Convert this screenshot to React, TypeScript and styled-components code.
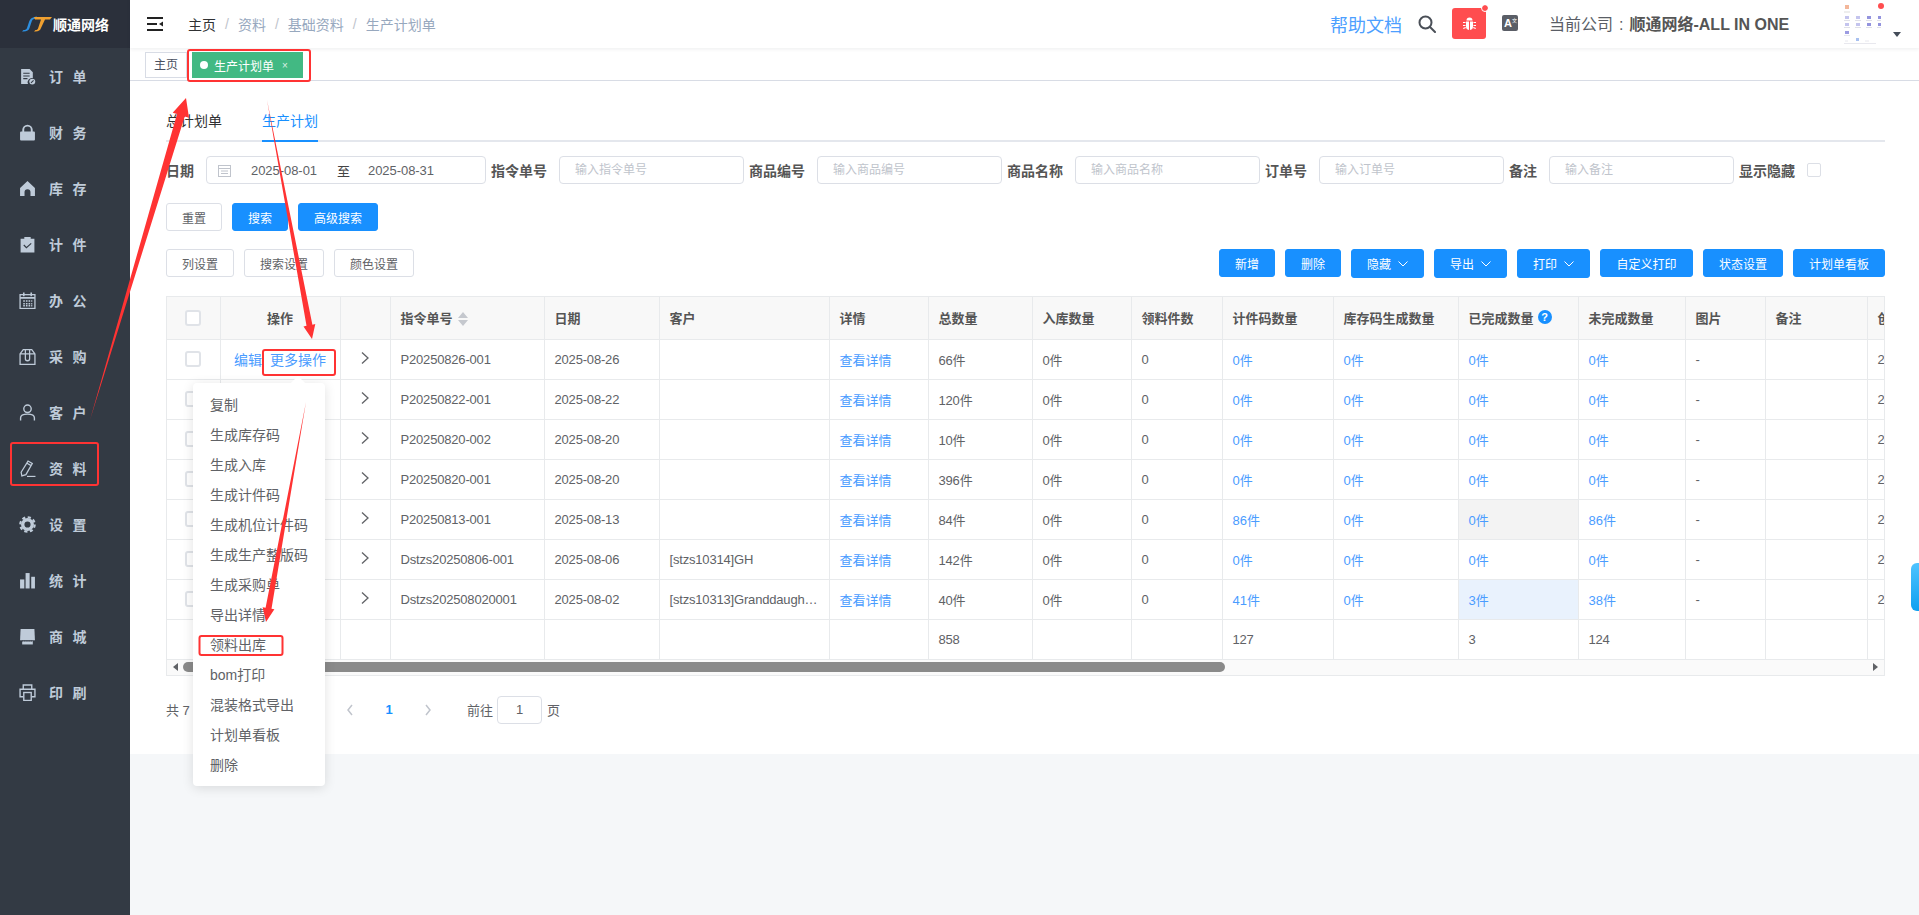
import React from "react";
import styled, { createGlobalStyle } from "styled-components";

const Global = createGlobalStyle`
  html, body { margin: 0; padding: 0; height: 915px; overflow: hidden; }
  body { font-family: "Liberation Sans", "Noto Sans CJK SC", sans-serif; color: #606266; }
  * { box-sizing: border-box; }
`;

const Page = styled.div`
  position: relative;
  display: grid;
  grid-template-columns: 130px 1fr;
  width: 1919px;
  height: 915px;
  overflow: hidden;
  background: #f5f7f9;
`;

/* ---------- sidebar ---------- */
const Sidebar = styled.aside`
  background: #333a44;
  display: flex;
  flex-direction: column;
`;
const LogoBar = styled.div`
  height: 48px;
  background: #2b303b;
  display: flex;
  align-items: center;
  padding-left: 22px;
  gap: 1px;
  color: #fff;
  font-size: 14px;
  font-weight: 700;
`;
const NavItem = styled.div`
  height: 56px;
  display: flex;
  align-items: center;
  padding-left: 19px;
  gap: 13px;
  color: #bfcbd9;
  font-size: 14px;
  font-weight: 700;
  letter-spacing: 9.5px;
  svg { flex: none; }
`;

const ic = { width: 17, height: 17, viewBox: "0 0 16 16" };
const navIcons: React.ReactNode[] = [
  <svg {...ic} key="o"><path fill="#bfcbd9" d="M2 1h8l3 3v5.5a4 4 0 0 0-4.5 5.5H2z" /><path stroke="#333a44" strokeWidth="1" d="M4 5h6M4 7.5h6M4 10h4" /><circle cx="12.5" cy="12.8" r="2.8" fill="#bfcbd9" /><path stroke="#333a44" d="M11.3 14l2.4-2.4" /></svg>,
  <svg {...ic} key="l"><rect x="1" y="7" width="14" height="8.5" rx="1" fill="#bfcbd9" /><path d="M4 7.5V5.5a4 4 0 0 1 8 0v2" fill="none" stroke="#bfcbd9" strokeWidth="1.8" /></svg>,
  <svg {...ic} key="h"><path fill="#bfcbd9" d="M8 1l7 6.5V15h-4.2v-3.6a2.8 2.8 0 0 0-5.6 0V15H1V7.5z" /></svg>,
  <svg {...ic} key="c"><path fill="#bfcbd9" d="M1.5 2.5H5V1h6v1.500h3.500V15.500h-13z" /><path d="M4.500 8.500l2.500 2.500 4.500-4" fill="none" stroke="#333a44" strokeWidth="1.100" /></svg>,
  <svg {...ic} key="k" fill="none" stroke="#bfcbd9"><rect x="1" y="2.500" width="14" height="13" strokeWidth="1.200" /><path strokeWidth="1.500" d="M4.500 .5v3.500M11.500 .5v3.500M1 5.500h14" /><path strokeWidth="1.300" strokeDasharray="1.500 1" d="M4 8.500h8.500M4 11h8.500M4 13h8.500" /></svg>,
  <svg {...ic} key="b" fill="none" stroke="#bfcbd9" strokeWidth="1.200"><path d="M1 5.500L4 1.500h8l3 4v10H1zM1 5.500h14" /><path d="M6 1.500v8.500a2 2 0 0 0 4 0V1.500" /></svg>,
  <svg {...ic} key="u" fill="none" stroke="#bfcbd9" strokeWidth="1.300"><circle cx="8" cy="4.500" r="3.500" /><path d="M1.500 15.500v-2.500c0-2 2-3.500 6.500-3.500s6.500 1.500 6.500 3.500v2.500" /></svg>,
  <svg {...ic} key="p" fill="none" stroke="#bfcbd9" strokeWidth="1.200"><path d="M2 11.500L8.500 1l4 2.300-6 10.500-3.800 1.200zM7.500 3l4 2.300" /><path d="M7.500 15.500h8" /></svg>,
  <svg {...ic} key="g" fill="none" stroke="#bfcbd9"><circle cx="8" cy="8" r="4.500" strokeWidth="3.200" /><circle cx="8" cy="8" r="6.800" strokeWidth="2" strokeDasharray="3 2.340" /></svg>,
  <svg {...ic} key="s" fill="#bfcbd9"><rect x="1" y="7" width="4" height="8.500" /><rect x="6.200" y="1" width="3.800" height="14.500" /><rect x="11.500" y="4.500" width="3.500" height="11" /></svg>,
  <svg {...ic} key="m" fill="#bfcbd9"><path d="M1.500 1h13l.5 10.500H1z" /><path d="M3 12.500h10v3H3z" /><path d="M3 12.300h10" stroke="#333a44" strokeDasharray="1 1" /></svg>,
  <svg {...ic} key="r" fill="none" stroke="#bfcbd9" strokeWidth="1.300"><path d="M4 5V1h8v4M4 12H1V5h14v7h-3" /><rect x="4.500" y="8" width="7" height="7.500" /></svg>,
];
const navLabels = ["订单", "财务", "库存", "计件", "办公", "采购", "客户", "资料", "设置", "统计", "商城", "印刷"];

/* ---------- main column ---------- */
const Main = styled.main`
  display: flex;
  flex-direction: column;
  min-width: 0;
`;
const TopBar = styled.header`
  height: 48px;
  background: #fff;
  display: flex;
  align-items: center;
  padding: 0 18px 0 17px;
  box-shadow: 0 1px 4px rgba(0, 21, 41, 0.08);
  position: relative;
`;
const Crumbs = styled.nav`
  display: flex;
  align-items: center;
  margin-left: 25px;
  font-size: 14px;
  color: #97a8be;
`;
const CrumbHome = styled.span`
  color: #303133;
`;
const CrumbSep = styled.span`
  margin: 0 9px;
  color: #c0c4cc;
`;
const HelpLink = styled.span`
  margin-left: auto;
  font-size: 18px;
  color: #4d9fff;
`;
const SearchIcon = styled.svg`
  margin-left: 16px;
  width: 18px;
  height: 18px;
`;
const BugButton = styled.div`
  position: relative;
  margin-left: 16px;
  width: 34px;
  height: 31px;
  margin-top: -1px;
  background: #ff4d4f;
  border-radius: 3px;
  display: flex;
  align-items: center;
  justify-content: center;
`;
const RedDot = styled.span`
  position: absolute;
  width: 6px;
  height: 6px;
  border-radius: 50%;
  background: #ff4d4f;
  right: -2px;
  top: -3px;
  outline: 1px solid #fff;
`;
const LangBox = styled.div`
  margin-left: 16px;
  margin-top: -2px;
  width: 16px;
  height: 16px;
  border-radius: 2px;
  background: #5a5e66;
  color: #fff;
  position: relative;
  font-size: 11px;
  font-weight: 700;
  line-height: 17px;
  padding-left: 2px;
`;
const LangSup = styled.span`
  position: absolute;
  right: 1px;
  top: -3px;
  font-size: 5px;
  font-weight: 400;
`;
const Company = styled.div`
  margin-left: 31px;
  margin-top: -2px;
  width: 240px;
  font-size: 16px;
  color: #5a5e66;
  white-space: nowrap;
  b { color: #555; }
`;
const Colon = styled.span`
  margin: 0 6px;
`;
const AvatarWrap = styled.div`
  position: relative;
  margin-left: 54px;
  width: 38px;
  height: 40px;
`;
const AvatarDot = styled(RedDot)`
  right: -3px;
  top: -1px;
  outline: none;
`;
const Caret = styled.span`
  margin-left: 12px;
  margin-top: 20px;
  width: 0;
  height: 0;
  border-left: 4px solid transparent;
  border-right: 4px solid transparent;
  border-top: 5px solid #444c59;
`;

const TabBar = styled.div`
  height: 33px;
  background: #fff;
  border-bottom: 1px solid #d8dce5;
  display: flex;
  padding: 4px 0 0 15px;
  gap: 5px;
`;
const HomeTab = styled.div`
  width: 42px;
  height: 26px;
  border: 1px solid #d8dce5;
  background: #fff;
  font-size: 12px;
  line-height: 24px;
  text-align: center;
  color: #495060;
`;
const ActiveTab = styled.div`
  width: 111px;
  height: 26px;
  background: #42b983;
  color: #fff;
  font-size: 12px;
  display: flex;
  align-items: center;
  padding-left: 8px;
  &::before {
    content: "";
    width: 8px;
    height: 8px;
    border-radius: 50%;
    background: #fff;
    margin-right: 6px;
  }
`;
const TabClose = styled.span`
  margin-left: 8px;
  font-size: 10px;
  opacity: 0.8;
`;

const Panel = styled.section`
  background: #fff;
  padding: 21px 34px 30px 36px;
`;
const Tabs = styled.div`
  display: flex;
  gap: 40px;
  border-bottom: 2px solid #e4e7ed;
  height: 40px;
`;
const TabItem = styled.div<{ $on?: boolean }>`
  height: 40px;
  line-height: 38px;
  font-size: 14px;
  color: ${(p) => (p.$on ? "#1890ff" : "#303133")};
  border-bottom: ${(p) => (p.$on ? "2px solid #1890ff" : "none")};
`;
const FilterRow = styled.div`
  display: flex;
  align-items: center;
  margin-top: 14px;
  height: 28px;
`;
const Label = styled.label`
  font-size: 14px;
  font-weight: 700;
  color: #555;
  margin-right: 12px;
  white-space: nowrap;
`;
const Field = styled.input`
  width: 185px;
  height: 28px;
  margin-right: 5px;
  padding: 0 15px;
  border: 1px solid #dcdfe6;
  border-radius: 4px;
  font: 12px "Liberation Sans", "Noto Sans CJK SC", sans-serif;
  &::placeholder { color: #c0c4cc; opacity: 1; }
`;
const DateBox = styled.div`
  width: 280px;
  height: 28px;
  margin-right: 5px;
  border: 1px solid #dcdfe6;
  border-radius: 4px;
  display: flex;
  align-items: center;
  padding-left: 11px;
  font-size: 13px;
  letter-spacing: -0.05px;
  color: #606266;
`;
const DateValue = styled.span`
  margin-left: 20px;
`;
const DateTo = styled.span`
  margin: 0 18px 0 20px;
  font-size: 13px;
  color: #444;
`;
const Check = styled.span<{ $size?: number }>`
  display: inline-block;
  width: ${(p) => p.$size ?? 14}px;
  height: ${(p) => p.$size ?? 14}px;
  border: ${(p) => (p.$size ? "2px solid #e0e3e8" : "1px solid #dcdfe6")};
  border-radius: ${(p) => (p.$size ? 3 : 2)}px;
  background: #fff;
  vertical-align: middle;
`;
const BtnRow = styled.div`
  display: flex;
  align-items: flex-start;
  gap: 10px;
  height: 28px;
  margin-top: 19px;
`;
const ToolRow = styled(BtnRow)`
  margin-top: 18px;
`;
const Btn = styled.button<{ $primary?: boolean; $w: number; $tall?: boolean }>`
  width: ${(p) => p.$w}px;
  height: ${(p) => (p.$tall ? 29 : 28)}px;
  padding: 0;
  border-radius: 3px;
  font: 12px "Liberation Sans", "Noto Sans CJK SC", sans-serif;
  border: 1px solid ${(p) => (p.$primary ? "#1890ff" : "#dcdfe6")};
  background: ${(p) => (p.$primary ? "#1890ff" : "#fff")};
  color: ${(p) => (p.$primary ? "#fff" : "#606266")};
  display: inline-flex;
  align-items: center;
  justify-content: center;
  gap: 7px;
`;
const Spacer = styled.div`
  flex: 1;
`;

const TableWrap = styled.div`
  margin-top: 19px;
  width: 1719px;
  overflow: hidden;
  border-top: 1px solid #e8eaec;
  border-left: 1px solid #e8eaec;
  border-right: 1px solid #e8eaec;
`;
const Table = styled.table`
  table-layout: fixed;
  border-collapse: collapse;
  width: 1860px;
  font-size: 13px;
`;
const Th = styled.th<{ $center?: boolean }>`
  height: 42px;
  padding: 0 10px;
  background: #f8f8f8;
  color: #555;
  font-weight: 700;
  text-align: ${(p) => (p.$center ? "center" : "left")};
  border-right: 1px solid #e8eaec;
  border-bottom: 1px solid #e8eaec;
  white-space: nowrap;
  overflow: hidden;
`;
const Td = styled.td<{ $bg?: string; $center?: boolean }>`
  height: 40px;
  padding: 0 10px;
  background: ${(p) => p.$bg ?? "#fff"};
  text-align: ${(p) => (p.$center ? "center" : "left")};
  border-right: 1px solid #e8eaec;
  border-bottom: 1px solid #e8eaec;
  color: #606266;
  white-space: nowrap;
  overflow: hidden;
  text-overflow: ellipsis;
  letter-spacing: -0.18px;
`;
const A = styled.span`
  color: #4a9cff;
  letter-spacing: 0;
`;
const OpLink = styled(A)`
  font-size: 14px;
  & + & { margin-left: 8px; }
`;
const SortIcon = styled.svg`
  margin-left: 5px;
  vertical-align: -3px;
`;
const Help = styled.span`
  display: inline-block;
  width: 14px;
  height: 14px;
  margin-left: 4px;
  border-radius: 50%;
  background: #1890ff;
  color: #fff;
  font-size: 11px;
  line-height: 14px;
  text-align: center;
  vertical-align: 2px;
`;
const HBar = styled.div`
  width: 1719px;
  height: 16px;
  background: #fafafa;
  border: 1px solid #e8eaec;
  border-top: none;
  display: flex;
  align-items: center;
  padding-left: 6px;
  padding-right: 6px;
`;
const Thumb = styled.div`
  width: 1042px;
  height: 10px;
  margin-left: 5px;
  background: #8a8a8a;
  border-radius: 5px;
`;
const ArrowL = styled.span`
  border-top: 4px solid transparent;
  border-bottom: 4px solid transparent;
  border-right: 5px solid #606266;
`;
const ArrowR = styled.span`
  margin-left: auto;
  border-top: 4px solid transparent;
  border-bottom: 4px solid transparent;
  border-left: 5px solid #606266;
`;
const Pager = styled.div`
  display: flex;
  align-items: center;
  margin-top: 20px;
  height: 28px;
  font-size: 13px;
  color: #606266;
`;
const Total = styled.span`
  width: 169px;
`;
const PageBtn = styled.span<{ $w: number; $on?: boolean }>`
  width: ${(p) => p.$w}px;
  display: flex;
  align-items: center;
  justify-content: center;
  font-weight: 700;
  color: #1890ff;
`;
const JumpLabel = styled.span`
  margin-left: 24px;
`;
const JumpInput = styled.span`
  width: 45px;
  height: 28px;
  margin: 0 5px 0 4px;
  border: 1px solid #dcdfe6;
  border-radius: 4px;
  text-align: center;
  line-height: 26px;
`;

/* ---------- overlays ---------- */
const Menu = styled.div`
  position: absolute;
  left: 193px;
  top: 383px;
  width: 132px;
  padding: 7px 0 6px;
  background: #fff;
  border-radius: 4px;
  box-shadow: 0 2px 12px rgba(0, 0, 0, 0.12);
  z-index: 5;
  &::before {
    content: "";
    position: absolute;
    left: 100px;
    top: -5px;
    width: 10px;
    height: 10px;
    background: #fff;
    transform: rotate(45deg);
  }
`;
const MenuItem = styled.div`
  position: relative;
  height: 30px;
  line-height: 30px;
  padding-left: 17px;
  font-size: 14px;
  color: #606266;
  white-space: nowrap;
`;
const FloatHandle = styled.div`
  position: absolute;
  right: 0;
  top: 563px;
  width: 8px;
  height: 48px;
  border-radius: 6px 0 0 6px;
  background: linear-gradient(180deg, #4fc3ff, #0fa0f0);
`;
const Annotations = styled.svg`
  position: absolute;
  left: 0;
  top: 0;
  z-index: 10;
  pointer-events: none;
`;

function arrow(tx: number, ty: number, hx: number, hy: number, shaft: number, head: number, len: number) {
  const d = Math.hypot(hx - tx, hy - ty);
  const ux = (hx - tx) / d, uy = (hy - ty) / d;
  const nx = -uy, ny = ux;
  const bx = hx - ux * len, by = hy - uy * len;
  const p = (x: number, y: number) => `${x.toFixed(1)},${y.toFixed(1)}`;
  return [
    p(tx, ty),
    p(bx + (nx * shaft) / 2, by + (ny * shaft) / 2),
    p(bx + (nx * head) / 2, by + (ny * head) / 2),
    p(hx, hy),
    p(bx - (nx * head) / 2, by - (ny * head) / 2),
    p(bx - (nx * shaft) / 2, by - (ny * shaft) / 2),
  ].join(" ");
}

const cols = [53, 120, 50, 154, 115, 170, 99, 104, 99, 91, 111, 125, 120, 107, 80, 102, 160];
const rows = [
  ["P20250826-001", "2025-08-26", "", "66件", "0件", "0", "0件", "0件", "0件", "0件"],
  ["P20250822-001", "2025-08-22", "", "120件", "0件", "0", "0件", "0件", "0件", "0件"],
  ["P20250820-002", "2025-08-20", "", "10件", "0件", "0", "0件", "0件", "0件", "0件"],
  ["P20250820-001", "2025-08-20", "", "396件", "0件", "0", "0件", "0件", "0件", "0件"],
  ["P20250813-001", "2025-08-13", "", "84件", "0件", "0", "86件", "0件", "0件", "86件"],
  ["Dstzs20250806-001", "2025-08-06", "[stzs10314]GH", "142件", "0件", "0", "0件", "0件", "0件", "0件"],
  ["Dstzs202508020001", "2025-08-02", "[stzs10313]Granddaughter", "40件", "0件", "0", "41件", "0件", "3件", "38件"],
];
const doneBg: Record<number, string> = { 4: "#f3f3f3", 6: "#e9f2fd" };
const menuItems = ["复制", "生成库存码", "生成入库", "生成计件码", "生成机位计件码", "生成生产整版码", "生成采购单", "导出详情", "领料出库", "bom打印", "混装格式导出", "计划单看板", "删除"];
const filters: [string, string][] = [
  ["指令单号", "输入指令单号"],
  ["商品编号", "输入商品编号"],
  ["商品名称", "输入商品名称"],
  ["订单号", "输入订单号"],
  ["备注", "输入备注"],
];

const Chevron = () => (
  <svg width="10" height="14" viewBox="0 0 10 14" fill="none" stroke="#606266" strokeWidth="1.300"><path d="M2 1.500l6 5.500-6 5.500" /></svg>
);
const PageChevron = ({ flip }: { flip?: boolean }) => (
  <svg width="8" height="12" viewBox="0 0 8 12" fill="none" stroke="#c0c4cc" strokeWidth="1.500">
    <path d={flip ? "M2 1l4 5-4 5" : "M6 1L2 6l4 5"} />
  </svg>
);
const Down = () => (
  <svg width="10" height="6" viewBox="0 0 10 6" fill="none" stroke="#fff" strokeWidth="1"><path d="M.5.5l4.500 4.500 4.500-4.500" /></svg>
);

export default function App() {
  return (
    <Page>
      <Global />
      <Sidebar>
        <LogoBar>
          <svg width="30" height="16" viewBox="0 0 30 16">
            <path d="M7 6c1-3 3-5 8-5.500l-1 2c-3 .3-4 1.500-4.500 3.500L7.500 12C7 14.500 4 16 0 15.500l1.500-1.500c2 0 3-.5 3.500-2z" fill="#2d8fe0" />
            <path d="M12 1h18l-2 2.500h-5L19 12c-.7 2.500-3 4-7 3.500l1.500-1.500c1.500 0 2.300-.5 2.700-2L19 3.500h-6z" fill="#f0a030" />
          </svg>
          顺通网络
        </LogoBar>
        {navLabels.map((l, i) => (
          <NavItem key={l}>{navIcons[i]}<span>{l}</span></NavItem>
        ))}
      </Sidebar>
      <Main>
        <TopBar>
          <svg width="16" height="14" viewBox="0 0 16 14" fill="#222">
            <rect width="16" height="2" />
            <rect y="6" width="10" height="2" />
            <path d="M16 4.500v5l-4-2.500z" />
            <rect y="12" width="16" height="2" />
          </svg>
          <Crumbs>
            <CrumbHome>主页</CrumbHome><CrumbSep>/</CrumbSep>
            <span>资料</span><CrumbSep>/</CrumbSep>
            <span>基础资料</span><CrumbSep>/</CrumbSep>
            <span>生产计划单</span>
          </Crumbs>
          <HelpLink>帮助文档</HelpLink>
          <SearchIcon viewBox="0 0 18 18" fill="none" stroke="#4a4f57" strokeWidth="2">
            <circle cx="7.500" cy="7.500" r="6" /><path d="M12 12l5 5" strokeLinecap="round" />
          </SearchIcon>
          <BugButton>
            <svg width="13" height="14" viewBox="0 0 13 14" fill="#fff">
              <path d="M3.500 3.500a3 3 0 0 1 6 0z" />
              <path d="M3 4.500h3v8.500a3.500 3.500 0 0 1-3-3.500zM7 4.500h3v5a3.500 3.500 0 0 1-3 3.500z" />
              <path d="M0 5h2.500v1H0zM10.500 5H13v1h-2.500zM0 8h2.500v1H0zM10.500 8H13v1h-2.500zM0 11l2.500-1 .5 1-2.500 1zM13 11l-2.500-1-.5 1 2.500 1z" />
            </svg>
            <RedDot />
          </BugButton>
          <LangBox>A<LangSup>文</LangSup></LangBox>
          <Company>当前公司<Colon>:</Colon><b>顺通网络-ALL IN ONE</b></Company>
          <AvatarWrap>
            <svg width="38" height="40" viewBox="0 0 38 40">
              <rect x="2" y="1" width="4" height="4" fill="#f3b79a" />
              <path d="M1 8h6" stroke="#ddd" />
              {[0, 1, 2, 3].flatMap((c) => [0, 1].map((r) => (
                <React.Fragment key={`${c}${r}`}>
                  <rect x={2 + c * 11} y={12 + r * 7} width="4" height="3" fill={c > 1 ? "#9494de" : "#c4c4ee"} />
                  <path d={`M${1 + c * 11} ${16.500 + r * 7}h6`} stroke="#e0e0e8" />
                </React.Fragment>
              )))}
              <rect x="2" y="27" width="4" height="3" fill="#9c9ce2" />
              <path d="M1 31.500h6M2 37h3M22 37h4M1 39.500h32" stroke="#e8e8ee" />
              <rect x="13" y="34" width="3" height="3" fill="#a8c0f0" />
            </svg>
            <AvatarDot />
          </AvatarWrap>
          <Caret />
        </TopBar>
        <TabBar>
          <HomeTab>主页</HomeTab>
          <ActiveTab>生产计划单<TabClose>×</TabClose></ActiveTab>
        </TabBar>
        <Panel>
          <Tabs>
            <TabItem>总计划单</TabItem>
            <TabItem $on>生产计划</TabItem>
          </Tabs>
          <FilterRow>
            <Label>日期</Label>
            <DateBox>
              <svg width="13" height="13" viewBox="0 0 13 13" fill="none" stroke="#c0c4cc"><rect x=".5" y="1.500" width="12" height="11" /><path d="M.5 4.500h12M3 7h7M3 9.500h7" /></svg>
              <DateValue>2025-08-01</DateValue>
              <DateTo>至</DateTo>
              <span>2025-08-31</span>
            </DateBox>
            {filters.map(([l, ph]) => (
              <React.Fragment key={l}>
                <Label>{l}</Label>
                <Field placeholder={ph} />
              </React.Fragment>
            ))}
            <Label>显示隐藏</Label>
            <Check />
          </FilterRow>
          <BtnRow>
            <Btn $w={56}>重置</Btn>
            <Btn $w={56} $primary>搜索</Btn>
            <Btn $w={80} $primary>高级搜索</Btn>
          </BtnRow>
          <ToolRow>
            <Btn $w={68}>列设置</Btn>
            <Btn $w={80}>搜索设置</Btn>
            <Btn $w={80}>颜色设置</Btn>
            <Spacer />
            <Btn $w={56} $primary>新增</Btn>
            <Btn $w={56} $primary>删除</Btn>
            <Btn $w={73} $primary $tall>隐藏<Down /></Btn>
            <Btn $w={73} $primary $tall>导出<Down /></Btn>
            <Btn $w={73} $primary $tall>打印<Down /></Btn>
            <Btn $w={93} $primary>自定义打印</Btn>
            <Btn $w={80} $primary>状态设置</Btn>
            <Btn $w={92} $primary>计划单看板</Btn>
          </ToolRow>
          <TableWrap>
            <Table>
              <colgroup>{cols.map((w, i) => <col key={i} width={w} />)}</colgroup>
              <thead>
                <tr>
                  <Th $center><Check $size={16} /></Th>
                  <Th $center>操作</Th>
                  <Th />
                  <Th>指令单号
                    <SortIcon width="10" height="14" viewBox="0 0 10 14" fill="#c5c8ce"><path d="M5 0l5 6H0zM0 8h10l-5 6z" /></SortIcon>
                  </Th>
                  <Th>日期</Th>
                  <Th>客户</Th>
                  <Th>详情</Th>
                  <Th>总数量</Th>
                  <Th>入库数量</Th>
                  <Th>领料件数</Th>
                  <Th>计件码数量</Th>
                  <Th>库存码生成数量</Th>
                  <Th>已完成数量<Help>?</Help></Th>
                  <Th>未完成数量</Th>
                  <Th>图片</Th>
                  <Th>备注</Th>
                  <Th>创建时间</Th>
                </tr>
              </thead>
              <tbody>
                {rows.map((r, i) => (
                  <tr key={r[0]}>
                    <Td $center><Check $size={16} /></Td>
                    <Td $center>{i === 0 && <><OpLink>编辑</OpLink><OpLink>更多操作</OpLink></>}</Td>
                    <Td $center><Chevron /></Td>
                    <Td>{r[0]}</Td>
                    <Td>{r[1]}</Td>
                    <Td>{r[2]}</Td>
                    <Td><A>查看详情</A></Td>
                    <Td>{r[3]}</Td>
                    <Td>{r[4]}</Td>
                    <Td>{r[5]}</Td>
                    <Td><A>{r[6]}</A></Td>
                    <Td><A>{r[7]}</A></Td>
                    <Td $bg={doneBg[i]}><A>{r[8]}</A></Td>
                    <Td><A>{r[9]}</A></Td>
                    <Td>-</Td>
                    <Td />
                    <Td>{r[1]}</Td>
                  </tr>
                ))}
                <tr>
                  <Td /><Td /><Td /><Td /><Td /><Td /><Td />
                  <Td>858</Td><Td /><Td />
                  <Td>127</Td><Td />
                  <Td>3</Td><Td>124</Td>
                  <Td /><Td /><Td />
                </tr>
              </tbody>
            </Table>
          </TableWrap>
          <HBar><ArrowL /><Thumb /><ArrowR /></HBar>
          <Pager>
            <Total>共 7 条</Total>
            <PageBtn $w={30}><PageChevron /></PageBtn>
            <PageBtn $w={48}>1</PageBtn>
            <PageBtn $w={30}><PageChevron flip /></PageBtn>
            <JumpLabel>前往</JumpLabel>
            <JumpInput>1</JumpInput>
            <span>页</span>
          </Pager>
        </Panel>
      </Main>
      <Menu>
        {menuItems.map((m) => <MenuItem key={m}>{m}</MenuItem>)}
      </Menu>
      <FloatHandle />
      <Annotations width="1919" height="915">
        <g fill="none" stroke="#f33" strokeWidth="2">
          <rect x="188" y="50" width="122" height="31" rx="2" />
          <rect x="263" y="350" width="72" height="25" rx="2" />
          <rect x="199.500" y="636" width="83" height="19" rx="2" />
          <rect x="11" y="443" width="87" height="42" rx="2" />
        </g>
        <g fill="#ff3333">
          <polygon points={arrow(90, 420, 186, 98, 8, 17, 18)} />
          <polygon points={arrow(267, 100, 312, 339, 6, 12, 14)} />
          <polygon points={arrow(306, 402, 266, 622, 6, 12, 14)} />
        </g>
      </Annotations>
    </Page>
  );
}
